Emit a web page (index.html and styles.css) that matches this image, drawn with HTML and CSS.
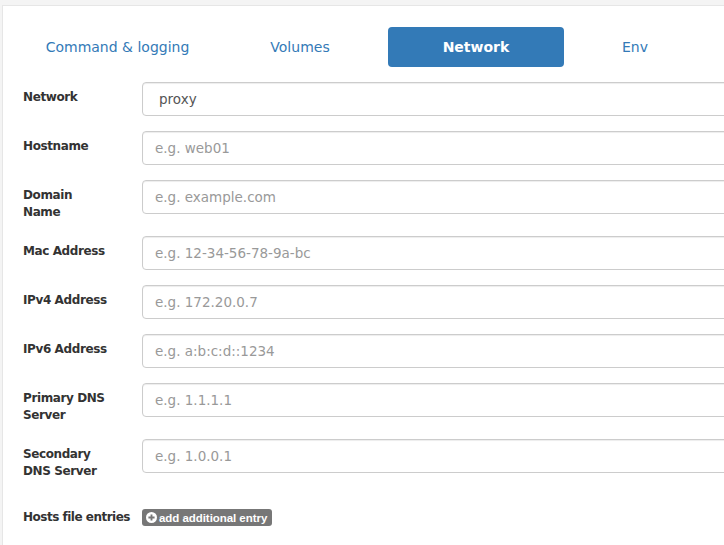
FILE: index.html
```html
<!DOCTYPE html>
<html>
<head>
<meta charset="utf-8">
<link rel="stylesheet" href="styles.css">
</head>
<body>
<div class="page">
  <div class="panel">
    <ul class="tabs">
      <li class="tab t1">Command &amp; logging</li>
      <li class="tab t2">Volumes</li>
      <li class="tab t3 active">Network</li>
      <li class="tab t4">Env</li>
    </ul>
    <form class="form">
      <div class="row">
        <label class="lbl">Network</label>
        <div class="ctrl select">proxy</div>
      </div>
      <div class="row">
        <label class="lbl">Hostname</label>
        <input class="ctrl" placeholder="e.g. web01">
      </div>
      <div class="row">
        <label class="lbl">Domain Name</label>
        <input class="ctrl" placeholder="e.g. example.com">
      </div>
      <div class="row">
        <label class="lbl">Mac Address</label>
        <input class="ctrl" placeholder="e.g. 12-34-56-78-9a-bc">
      </div>
      <div class="row">
        <label class="lbl">IPv4 Address</label>
        <input class="ctrl" placeholder="e.g. 172.20.0.7">
      </div>
      <div class="row">
        <label class="lbl">IPv6 Address</label>
        <input class="ctrl" placeholder="e.g. a:b:c:d::1234">
      </div>
      <div class="row">
        <label class="lbl">Primary DNS Server</label>
        <input class="ctrl" placeholder="e.g. 1.1.1.1">
      </div>
      <div class="row">
        <label class="lbl">Secondary DNS Server</label>
        <input class="ctrl" placeholder="e.g. 1.0.0.1">
      </div>
      <div class="hosts">
        <span class="hosts-lbl">Hosts file entries</span>
        <span class="badge">
          <svg class="plus" viewBox="0 0 10 10" width="11" height="11"><circle cx="5" cy="5" r="5" fill="#fff"/><path d="M5 2.2v5.6M2.2 5h5.6" stroke="#777" stroke-width="1.7"/></svg>
          add additional entry
        </span>
      </div>
    </form>
  </div>
</div>
</body>
</html>
```
FILE: styles.css
```css
html, body {
  margin: 0;
  padding: 0;
}
body {
  background: #f4f4f4;
  width: 724px;
  height: 545px;
  overflow: hidden;
  font-family: "DejaVu Sans", sans-serif;
  color: #333;
}
.page {
  padding: 5px 0 0 2px;
  height: 540px;
  overflow: hidden;
}
.panel {
  background: #fff;
  border-top: 1px solid #e6e6e6;
  border-left: 1px solid #e6e6e6;
  width: 722px;
  height: 540px;
  overflow: hidden;
  padding-top: 21px;
  box-sizing: border-box;
}
.tabs {
  list-style: none;
  margin: 0 0 0 20px;
  padding: 0;
  display: flex;
}
.tab {
  flex: none;
  height: 40px;
  display: flex;
  align-items: center;
  justify-content: center;
  font-size: 14px;
  color: #337ab7;
  border-radius: 4px;
}
.t1 { width: 189px; }
.t2 { width: 176px; }
.t3 { width: 176px; }
.t4 { width: 142px; }
.tab.active {
  background: #337ab7;
  color: #fff;
  font-weight: bold;
}
.form {
  margin: 15px 0 0 20px;
}
.row {
  display: flex;
  align-items: flex-start;
  margin-bottom: 15px;
}
.lbl {
  flex: none;
  width: 89px;
  margin-right: 30px;
  padding-top: 7px;
  font-size: 12px;
  line-height: 17px;
  font-weight: bold;
  letter-spacing: -0.4px;
  color: #333;
}
.ctrl {
  flex: none;
  box-sizing: border-box;
  width: 700px;
  height: 34px;
  border: 1px solid #ccc;
  border-radius: 4px;
  padding: 6px 12px;
  font-family: "DejaVu Sans", sans-serif;
  font-size: 13.5px;
  color: #555;
  box-shadow: inset 0 1px 1px rgba(0,0,0,.075);
  outline: none;
  background: #fff;
}
.ctrl::placeholder {
  color: #999;
}
.select {
  padding-left: 16px;
  line-height: 20px;
}
.hosts {
  display: flex;
  align-items: center;
  padding-top: 14px;
}
.hosts-lbl {
  font-size: 12px;
  font-weight: bold;
  line-height: 17px;
  letter-spacing: -0.5px;
  color: #333;
}
.badge {
  margin-left: 12px;
  background: #777;
  color: #fff;
  border-radius: 3px;
  height: 17px;
  padding: 0 5px 0 4px;
  display: inline-flex;
  align-items: center;
  gap: 2px;
  font-family: "Liberation Sans", sans-serif;
  font-weight: bold;
  font-size: 11.5px;
  letter-spacing: -0.05px;
}
.plus {
  display: block;
}
```
